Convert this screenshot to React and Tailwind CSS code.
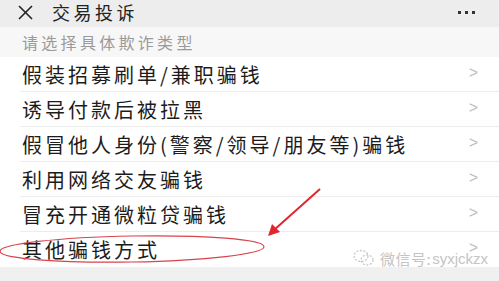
import React from "react";

const items = [
  "假装招募刷单/兼职骗钱",
  "诱导付款后被拉黑",
  "假冒他人身份(警察/领导/朋友等)骗钱",
  "利用网络交友骗钱",
  "冒充开通微粒贷骗钱",
  "其他骗钱方式",
];

export default function App() {
  return (
    <div
      className="relative w-[499px] h-[281px] overflow-hidden bg-[#f0f0f0]"
      style={{ fontFamily: '"Noto Sans CJK SC", "Noto Sans", sans-serif' }}
    >
      <div className="h-[27px] bg-[#ededed] flex items-center pl-[18px] pr-[24px]">
        <svg width="15" height="15" viewBox="0 0 15 15" className="-mt-[3px] shrink-0" stroke="#222" strokeWidth="1.6">
          <line x1="1" y1="1" x2="14" y2="14" />
          <line x1="14" y1="1" x2="1" y2="14" />
        </svg>
        <span className="ml-[19px] text-[18px] leading-none text-[#222] tracking-[3.5px] -mt-[3px]">交易投诉</span>
        <div className="ml-auto flex gap-[4px] -mt-[3px]">
          <span className="w-[3px] h-[3px] bg-[#333]" />
          <span className="w-[3px] h-[3px] bg-[#333]" />
          <span className="w-[3px] h-[3px] bg-[#333]" />
        </div>
      </div>
      <div className="h-[30px] bg-[#f7f7f7] flex items-center pl-[22px]">
        <span className="text-[16px] leading-none text-[#9a9a9a] tracking-[3.3px]">请选择具体欺诈类型</span>
      </div>
      <div className="bg-white">
        {items.map((t, i) => (
          <div key={i} className="h-[35px] flex items-center pl-[22px] pr-[21px] relative">
            <span className="text-[20px] leading-none text-[#1c1c1c] tracking-[3px] whitespace-nowrap">{t}</span>
            <span className="ml-auto text-[16px] leading-none text-[#bdbdbd] -mt-[4px]" style={{ fontFamily: '"Liberation Sans", sans-serif' }}>&gt;</span>
            {i < items.length - 1 && (
              <div className="absolute left-[20px] right-0 bottom-0 h-px bg-[#ececec]" />
            )}
          </div>
        ))}
      </div>
      <div className="absolute right-[11px] top-[249px] flex items-center gap-[5px] text-[#c4c4c4]">
        <svg width="22" height="18" viewBox="0 0 22 18" fill="none" stroke="#c8c8c8" strokeWidth="1.3" strokeDasharray="2 1.5">
          <ellipse cx="8" cy="7" rx="7" ry="5.5" />
          <ellipse cx="14" cy="11" rx="6" ry="5" />
        </svg>
        <span className="text-[15px] leading-none tracking-[0.5px]">微信号:</span>
        <span className="text-[15px] leading-none -ml-[4px]" style={{ fontFamily: '"Liberation Sans", sans-serif' }}>syxjckzx</span>
      </div>
      <svg className="absolute left-0 top-0 pointer-events-none" width="499" height="281" viewBox="0 0 499 281">
        <ellipse cx="132" cy="249" rx="132" ry="13" fill="none" stroke="#d9434a" strokeWidth="1.2" transform="rotate(-1 132 249)" />
        <line x1="320" y1="189" x2="274" y2="230" stroke="#e0262e" strokeWidth="2" />
        <polygon points="268,236 272,224 280,232" fill="#e0262e" />
      </svg>
    </div>
  );
}
